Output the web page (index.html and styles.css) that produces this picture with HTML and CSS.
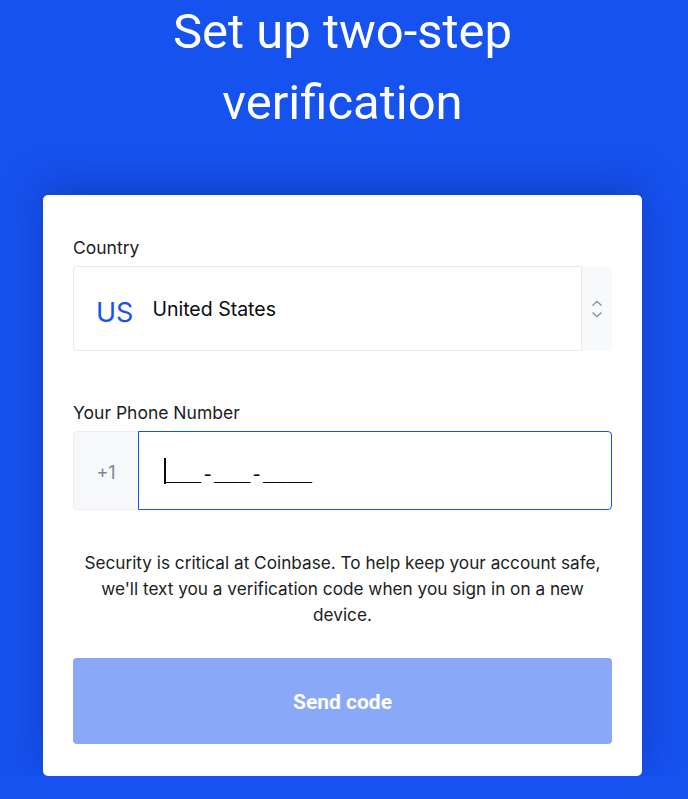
FILE: index.html
```html
<!DOCTYPE html>
<html lang="en">
<head>
    <meta charset="UTF-8">
    <meta name="viewport" content="width=device-width, initial-scale=1.0">
    <title>Two-step verification</title>
    <link rel="stylesheet" href="styles.css">
</head>
<body>
    <div class="page">
        <h1 class="title">Set up two-step verification</h1>

        <div class="card">
            <!-- Country picker -->
            <div class="field field-country">
                <label class="field-label">Country</label>
                <div class="select">
                    <div class="select-value">
                        <span class="country-code">US</span>
                        <span class="country-name">United States</span>
                    </div>
                    <div class="select-arrows">
                        <svg width="12" height="22" viewBox="0 0 12 22">
                            <path d="M1.5 7.5 L6 3.5 L10.5 7.5" fill="none" stroke="#8593a6" stroke-width="1.4"/>
                            <path d="M1.5 14.5 L6 18.5 L10.5 14.5" fill="none" stroke="#8593a6" stroke-width="1.4"/>
                        </svg>
                    </div>
                </div>
            </div>

            <!-- Phone number -->
            <div class="field">
                <label class="field-label">Your Phone Number</label>
                <div class="phone">
                    <div class="phone-prefix">+1</div>
                    <div class="phone-input">
                        <span class="caret"></span>
                        <span class="mask">___-___-____</span>
                    </div>
                </div>
            </div>

            <p class="note">Security is critical at Coinbase. To help keep your account safe, we'll text you a verification code when you sign in on a new device.</p>

            <button class="send-btn" disabled>Send code</button>
        </div>
    </div>
</body>
</html>
```

FILE: styles.css
```css
body {
    margin: 0;
    background-color: #1652f0;
    font-family: 'Inter', 'Liberation Sans', sans-serif;
    color: #0a0b0d;
}

.page {
    padding: 0 46px 0 43px;
}

/* Heading */
.title {
    margin: -4px 0 4px;
    padding: 0 40px;
    font-family: 'Roboto', sans-serif;
    font-weight: 400;
    font-size: 49px;
    line-height: 71px;
    text-align: center;
    color: #ffffff;
    height: 195px;
    box-sizing: border-box;
}

/* Card */
.card {
    background-color: #ffffff;
    border-radius: 5px;
    padding: 41px 30px 32px;
    box-shadow: 0 -8px 40px rgba(10, 30, 110, 0.35);
}

.field-country {
    margin-bottom: 50px;
}

.field-label {
    display: block;
    font-size: 17.5px;
    line-height: 24px;
    color: #1b1d22;
    margin-bottom: 6px;
}

/* Select */
.select {
    display: flex;
    height: 85px;
}

.select-value {
    flex: 1;
    display: flex;
    align-items: center;
    border: 1px solid #e7e9ec;
    border-radius: 4px 0 0 4px;
    padding-left: 22px;
}

.country-code {
    font-size: 27px;
    color: #1652f0;
    margin-right: 19px;
    padding-top: 8px;
}

.country-name {
    font-size: 19.5px;
    color: #0a0b0d;
}

.select-arrows {
    width: 30px;
    display: flex;
    align-items: center;
    justify-content: center;
    background-color: #f7f9fb;
    border-radius: 0 4px 4px 0;
}

/* Phone */
.phone {
    display: flex;
    height: 79px;
}

.phone-prefix {
    width: 65px;
    display: flex;
    align-items: center;
    justify-content: center;
    background-color: #f7f8fa;
    border: 1px solid #eceef1;
    border-right: none;
    border-radius: 4px 0 0 4px;
    color: #7b8799;
    font-size: 18px;
    padding-top: 3px;
    box-sizing: border-box;
}

.phone-input {
    flex: 1;
    display: flex;
    align-items: center;
    border: 1px solid #1652f0;
    border-radius: 0 4px 4px 0;
    padding-left: 25px;
}

.caret {
    width: 1.5px;
    height: 26px;
    background-color: #0a0b0d;
    margin-right: -1px;
}

.mask {
    font-family: 'Liberation Mono', monospace;
    font-size: 20.5px;
    color: #0a0b0d;
    padding-top: 10px;
}

.note {
    margin: 40px 0 30px;
    font-size: 17.2px;
    line-height: 26px;
    text-align: center;
    color: #1b1d22;
    padding: 0 4px;
}

.send-btn {
    display: block;
    width: 100%;
    height: 86px;
    border: none;
    border-radius: 4px;
    background-color: #8aa8f8;
    color: #ffffff;
    font-family: 'Roboto', sans-serif;
    font-weight: 700;
    font-size: 21px;
    padding-top: 2px;
}
```
